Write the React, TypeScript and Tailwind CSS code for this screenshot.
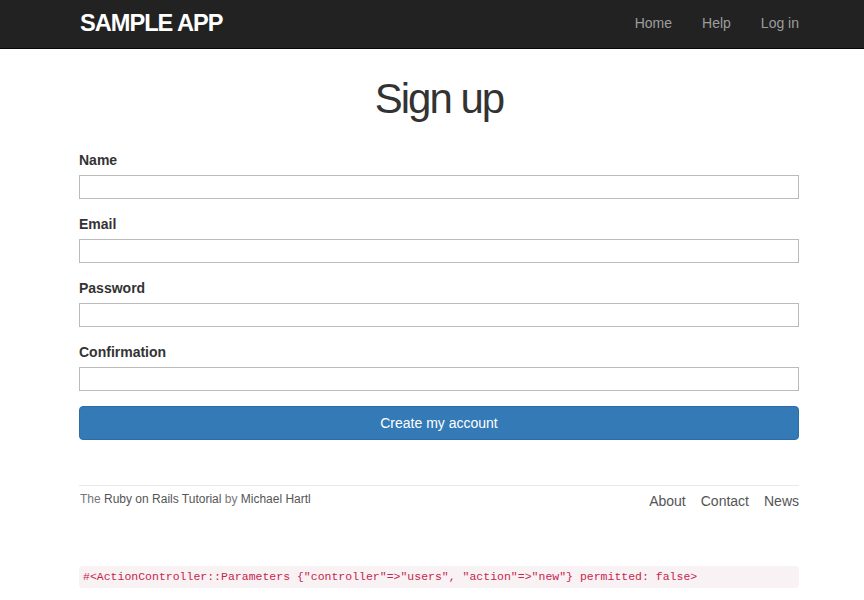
import React from "react";

const fields = ["Name", "Email", "Password", "Confirmation"];

function Header() {
  return (
    <header className="h-[49px] bg-[#222222] border-b border-[#080808]">
      <div className="w-[720px] ml-[79px] h-12 flex items-center justify-between">
        <a className="text-white font-bold uppercase text-[23.6px] tracking-[-1px] leading-none pl-px">
          sample app
        </a>
        <nav className="flex text-[14px] text-[#9d9d9d] -mr-[15px] -mt-[2px]">
          <a className="px-[15px]">Home</a>
          <a className="px-[15px]">Help</a>
          <a className="px-[15px]">Log in</a>
        </nav>
      </div>
    </header>
  );
}

function App() {
  return (
    <div className="min-h-[600px] bg-white font-['Liberation_Sans',Arial,sans-serif] text-[#333333]">
      <Header />
      <main className="w-[720px] ml-[79px]">
        <h1 className="text-center text-[42px] tracking-[-2px] leading-[46px] pt-[27px] mb-[28px]">
          Sign up
        </h1>

        <form>
          {fields.map((f) => (
            <div key={f}>
              <label className="block text-[14px] font-bold leading-5 mb-[5px]">{f}</label>
              <input
                type={f === "Password" || f === "Confirmation" ? "password" : "text"}
                className="block w-full h-6 border border-[#bbbbbb] mb-[15px] outline-none"
              />
            </div>
          ))}
          <button
            type="button"
            className="w-full h-[34px] rounded-[4px] bg-[#337ab7] border border-[#2e6da4] text-white text-[14px]"
          >
            Create my account
          </button>
        </form>

        <footer className="mt-[45px] border-t border-[#eaeaea] pt-[5px] flex justify-between items-start">
          <small className="text-[12px] text-[#777777] leading-[17px] pl-px">
            The <a className="text-[#555555]">Ruby on Rails Tutorial</a> by{" "}
            <a className="text-[#555555]">Michael Hartl</a>
          </small>
          <ul className="flex gap-[15px] text-[14px] text-[#555555] leading-5">
            <li>About</li>
            <li>Contact</li>
            <li>News</li>
          </ul>
        </footer>

        <pre className="mt-[55px] rounded-[4px] bg-[#f9f2f4] text-[#c7254e] font-['Liberation_Mono',monospace] text-[11.5px] leading-[22px] px-1">
          {'#<ActionController::Parameters {"controller"=>"users", "action"=>"new"} permitted: false>'}
        </pre>
      </main>
    </div>
  );
}

export default App;
